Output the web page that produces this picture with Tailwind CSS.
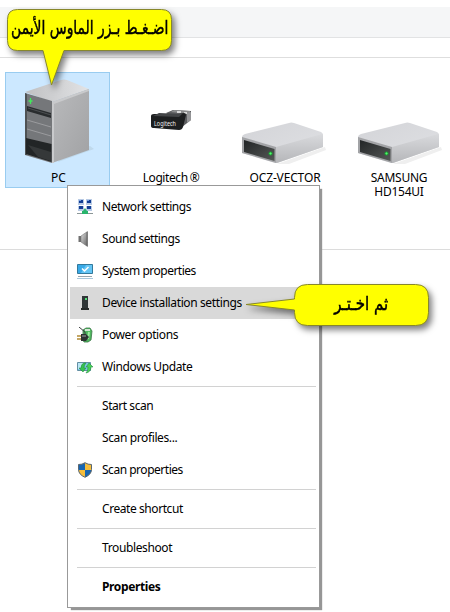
<!DOCTYPE html>
<html lang="en">
<head>
<meta charset="utf-8">
<title>Devices and Printers</title>
<script src="https://cdn.jsdelivr.net/npm/@tailwindcss/browser@4"></script>
</head>
<body class="relative h-[612px] w-[450px] overflow-hidden bg-white font-['Noto_Sans','Open_Sans',sans-serif] text-[12px] leading-[14px] text-black">
<svg class="absolute h-0 w-0">
  <defs>
    <linearGradient id="side" x1="0" y1="0" x2="1" y2="1"><stop stop-color="#b9babc"/><stop offset="1" stop-color="#a1a2a4"/></linearGradient>
    <linearGradient id="top" x1="0" y1="0" x2="1" y2="0"><stop stop-color="#bfc0c2"/><stop offset="1" stop-color="#e2e3e5"/></linearGradient>
    <linearGradient id="lid" x1="0" y1="0" x2="1" y2="1"><stop stop-color="#d3d4d8"/><stop offset="1" stop-color="#e0e1e4"/></linearGradient>
    <linearGradient id="edge" x1="0" y1="0" x2="0" y2="1"><stop stop-color="#d9dadd"/><stop offset="1" stop-color="#b5b6b9"/></linearGradient>
    <linearGradient id="slot" x1="0" y1="0" x2="1" y2="1"><stop stop-color="#222526"/><stop offset="1" stop-color="#555857"/></linearGradient>
    <linearGradient id="cone" x1="0" y1="0" x2="1" y2="1"><stop stop-color="#e4e4e4"/><stop offset="1" stop-color="#5e5e5e"/></linearGradient>
    <symbol id="drive" viewBox="0 0 90 46">
      <path d="M38 42L86 25L87 28L50 42Z" fill="#efefef"/>
      <path d="M3 15Q3 13 6 12L50 1Q52 0 55 1L82 10Q84 11 84 13V25L38 41L36 41L3 31Z" fill="url(#lid)"/>
      <path d="M37 25L83 12Q84 12 84 13V25L38 41H37Z" fill="url(#edge)"/>
      <path d="M3 15L37 25V41L3 31Z" fill="#a2a3a6"/>
      <path d="M5 18L35.500 27V39L5 30Z" fill="url(#slot)"/>
      <circle cx="31.500" cy="31.500" r="2" fill="#1fa338"/><path d="M30.500 31.500h2M31.500 30.500v2" stroke="#58f66e"/>
    </symbol>
  </defs>
</svg>

<div class="flex h-full flex-col">
  <div class="mt-[7px] h-[31px] border-b border-[#e2e3e4] bg-[#f5f6f7]"></div>
  <div class="h-5 border-b border-[#dedede]"></div>
  <main class="flex h-[192px] border-b border-[#dcdcdc] pt-[14px] pl-[5px]">
    <div class="flex h-[116px] w-[105px] flex-col items-center border border-[#99ccf0] bg-[#cce8ff]">
      <svg class="h-[98px] w-[103px]" viewBox="6 73 103 98">
        <path d="M60 159L90 146L94 149L58 162Z" fill="#b6cfdf" opacity=".6"/>
        <path d="M25 92L61 80Q64 79 67 80L89 89L52 102Z" fill="url(#top)"/>
        <path d="M52 102L89 89V150L52 163Z" fill="url(#side)"/>
        <path d="M52 102L89 89V91L54 104V163H52Z" fill="#c9cacc"/>
        <path d="M25 93L52 101V163L25 155Z" fill="#75777a"/>
        <path d="M25 93L27 94V155L25 155Z" fill="#4f5254"/>
        <path d="M27 106L51 113V118L27 111Z" fill="#292c2e"/><path d="M28 108L51 115" stroke="#5b5f61" stroke-width=".7"/>
        <path d="M26 138L51.500 144V162L26 154Z" fill="#222526"/><path d="M28 145L51 152V161L38 157Z" fill="#353839"/>
        <path d="M27 120L51 127M27 129L51 136" stroke="#aaabad" stroke-width=".7"/>
        <path d="M30.500 98v6M28.500 101h4" stroke="#41e95b" stroke-width="1.300"/>
      </svg>
      <span class="pl-[2px]">PC</span>
    </div>
    <div class="flex w-[120px] flex-col items-center pt-[31px]">
      <svg class="h-[32px] w-[44px]" viewBox="148 102 44 32">
        <path d="M166 112L173 109L191 110V119L182 126Z" fill="#5d5e60"/><path d="M171 111L174 109L190 110V113Z" fill="#8a8b8c"/><path d="M177 110h4v2h-4zM184 111h3v2h-3z" fill="#d7d7d7"/><path d="M187 112L191 111V119L187 122Z" fill="#949597"/>
        <path d="M151 115Q151 113 154 113H179L184 112Q186 112 186 114L183 126Q182 129 179 129L154 127Q151 127 151 125Z" fill="#1d1f20"/>
        <path d="M153 115L159 112L182 113L179 116Z" fill="#434547"/>
        <text x="154" y="124.500" font-family="Noto Sans,sans-serif" font-size="6.500" textLength="22" lengthAdjust="spacingAndGlyphs" fill="#f0f0f0">Logitech</text>
      </svg>
      <span class="mt-[36px] pl-[2px] tracking-[-0.4px]">Logitech<span class="pl-[2px]">®</span></span>
    </div>
    <div class="flex w-[108px] flex-col items-center pt-[50px]">
      <svg class="h-[46px] w-[90px]"><use href="#drive"/></svg>
      <span class="mt-[3px] pl-[2px] tracking-[-0.15px]">OCZ-VECTOR</span>
    </div>
    <div class="flex w-[112px] flex-col items-center pt-[50px]">
      <svg class="ml-[12px] h-[46px] w-[90px] shrink-0"><use href="#drive"/></svg>
      <span class="mt-[3px] pl-[10px] text-center tracking-[-0.25px]">SAMSUNG</span>
      <span class="pl-[10px] text-center tracking-[-0.25px]">HD154UI</span>
    </div>
  </main>
</div>

<nav class="absolute top-[185px] left-[67px] flex h-[423px] w-[253px] flex-col border border-[#999] bg-white px-[2px] pt-[5px] tracking-[-0.38px] shadow-[3px_3px_1px_-1px_#969696]">
  <div class="flex h-8 items-center pl-[7px]">
    <svg class="h-4 w-4" viewBox="0 0 16 16"><path d="M1 0h6v6H1zM9 0h6v6H9zM1 7h6v5H1zM9 7h6v5H9z" fill="#b9cbe5"/><path d="M2 1h4v3H2zM10 1h4v3h-4zM2 7h4v3H2zM10 7h4v3h-4z" fill="#123e94"/><path d="M2 1h2v1H2zM10 1h2v1h-2z" fill="#739be0"/><path d="M0 14h16v1H0z" fill="#8c9797"/><path d="M8 9l2 3h1v3H5v-3h1z" fill="#28b46c"/></svg>
    <span class="pl-[9px] tracking-[-0.45px]">Network settings</span>
  </div>
  <div class="flex h-8 items-center pl-[7px]">
    <svg class="h-4 w-4" viewBox="0 0 16 16"><path d="M1.500 5h3v6h-3z" fill="#707070"/><path d="M4 5L10.500.500v15L4 11z" fill="url(#cone)" stroke="#777" stroke-width=".6"/><path d="M10 1v14" stroke="#686868"/></svg>
    <span class="pl-[9px] tracking-[-0.45px]">Sound settings</span>
  </div>
  <div class="flex h-8 items-center pl-[7px]">
    <svg class="h-4 w-4" viewBox="0 0 16 16"><path d="M.500 1.500h15v9H.500z" fill="#38a9e7" stroke="#32799c"/><path d="M9 2h6v8H4z" fill="#65c5f4"/><path d="M5 5.500l2.500 2.500L11.500 4" fill="none" stroke="#fff" stroke-width="1.500"/><path d="M1 13.500h14" stroke="#99a6ad"/><path d="M0 15.500h16" stroke="#a9c8dc"/></svg>
    <span class="pl-[9px] tracking-[-0.5px]">System properties</span>
  </div>
  <div class="flex h-8 items-center bg-[#d9d9d9] pl-[7px]">
    <svg class="h-4 w-4" viewBox="0 0 16 16"><path d="M5 1h6v13H5z" fill="#303638"/><path d="M4 13h8v2H4z" fill="#252929"/><path d="M8 3h2v2H8z" fill="#51e276"/></svg>
    <span class="pl-[9px]">Device installation settings</span>
  </div>
  <div class="flex h-8 items-center pl-[7px]">
    <svg class="h-4 w-4" viewBox="0 0 16 16"><path d="M6 3l3-2h4l2 3-1 9-3 2H7l-1-2z" fill="#4fb65e" stroke="#397546" stroke-width=".8"/><path d="M8 2h5v2H8z" fill="#d5e8d6"/><path d="M12 5l-1 7" stroke="#9bec9e" stroke-width="2"/><path d="M2 0l6 5v3" fill="none" stroke="#383d3d"/><path d="M0 9h4M0 12h4" stroke="#b18a35" stroke-width="1.500"/><path d="M4 7h5l3 3-3 4H4z" fill="#2d3332"/><path d="M5 9h4" stroke="#9da4a2"/></svg>
    <span class="pl-[9px]">Power options</span>
  </div>
  <div class="flex h-8 items-center pl-[7px]">
    <svg class="h-4 w-4" viewBox="0 0 16 16"><path d="M.500 3.500h13v8H.500z" fill="#7cc7e5" stroke="#638fa3"/><path d="M1 4h7l-5 6H1z" fill="#bae7f6"/><path d="M7 4q-3 1-3 5H2l4 4 3-4H7q0-3 2-5z" fill="#35c250" stroke="#188538" stroke-width=".5"/><path d="M12 4l4 4h-2q0 5-5 6 2-2 2-6H9z" fill="#48d057" stroke="#188538" stroke-width=".5"/></svg>
    <span class="pl-[9px]">Windows Update</span>
  </div>
  <div class="my-[3px] mr-px ml-[7px] h-px shrink-0 bg-[#d2d2d2]"></div>
  <div class="flex h-8 items-center pl-8 tracking-[-0.45px]">Start scan</div>
  <div class="flex h-8 items-center pl-8">Scan profiles...</div>
  <div class="flex h-8 items-center pl-[7px]">
    <svg class="h-4 w-4" viewBox="0 0 16 16"><path d="M8 .700q3 2 6.500 1.800v5q0 5-6.500 7.800Q1.500 12.500 1.500 7.500v-5Q5 2.700 8 .700z" fill="#f5bd3b"/><path d="M8 1Q5 2.700 1.500 2.500V8H8zM8 8h6.500Q14 12.500 8 15.300z" fill="#1765b1"/><path d="M8 .700q3 2 6.500 1.800v5q0 5-6.500 7.800Q1.500 12.500 1.500 7.500v-5Q5 2.700 8 .700z" fill="none" stroke="#596773"/></svg>
    <span class="pl-[9px] tracking-[-0.48px]">Scan properties</span>
  </div>
  <div class="my-[3px] mr-px ml-[7px] h-px shrink-0 bg-[#d2d2d2]"></div>
  <div class="flex h-8 items-center pl-8 tracking-[-0.43px]">Create shortcut</div>
  <div class="my-[3px] mr-px ml-[7px] h-px shrink-0 bg-[#d2d2d2]"></div>
  <div class="flex h-8 items-center pl-8">Troubleshoot</div>
  <div class="my-[3px] mr-px ml-[7px] h-px shrink-0 bg-[#d2d2d2]"></div>
  <div class="flex h-8 items-center pl-8 font-bold">Properties</div>
</nav>

<div class="absolute top-[9px] left-[7px] h-[78px] w-[166px]">
  <svg class="absolute inset-0 h-full w-full overflow-visible drop-shadow-[3px_4px_3px_rgba(0,0,0,0.5)]" viewBox="7 9 166 78"><path d="M17.500 9.500H161.500Q171.500 9.500 171.500 19.500V40.500Q171.500 50.500 161.500 50.500H64L51.500 85L43 50.500H17.500Q7.500 50.500 7.500 40.500V19.500Q7.500 9.500 17.500 9.500Z" fill="#ffff00" stroke="#87872b"/></svg>
  <div class="relative flex h-[36px] items-center justify-center whitespace-nowrap font-['DejaVu_Sans',sans-serif] text-[19px] leading-none"><span dir="rtl" class="inline-block shrink-0 scale-x-[0.73] [-webkit-text-stroke:0.5px_black]">اضـغـط بـزر الماوس الأيمن</span></div>
</div>
<div class="absolute top-[284px] left-[246px] h-[42px] w-[183px]">
  <svg class="absolute inset-0 h-full w-full overflow-visible drop-shadow-[3px_4px_3px_rgba(0,0,0,0.5)]" viewBox="246 284 183 42"><path d="M307.500 284.500H415.500Q428.500 284.500 428.500 297.500V312.500Q428.500 325.500 415.500 325.500H307.500Q294.500 325.500 294.500 312.500V310L246 304.500L294.500 299V297.500Q294.500 284.500 307.500 284.500Z" fill="#ffff00" stroke="#87872b"/></svg>
  <div class="relative ml-[48px] flex h-[38px] items-center justify-center whitespace-nowrap font-['DejaVu_Sans',sans-serif] text-[19px] leading-none"><span dir="rtl" class="inline-block shrink-0 scale-x-[0.79] [-webkit-text-stroke:0.5px_black]">ثم اخـتـر</span></div>
</div>
</body>
</html>
